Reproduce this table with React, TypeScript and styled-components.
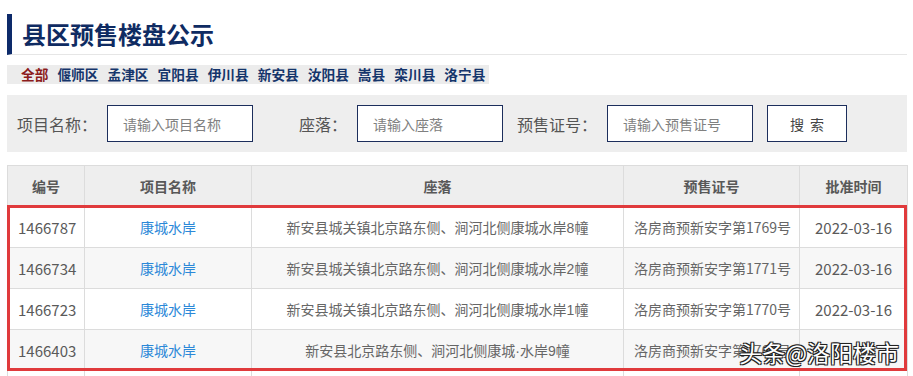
import React from "react";
import styled, { createGlobalStyle } from "styled-components";

const GlobalStyle = createGlobalStyle`
  html, body { margin: 0; padding: 0; background: #fff; }
  body { font-family: "Noto Sans CJK SC", sans-serif; }
  * { box-sizing: border-box; }
`;

const Page = styled.div`
  width: 900px;
  margin-left: 7px;
  padding-top: 14px;
`;

const TitleBar = styled.div`
  height: 41px;
  border-left: 5px solid #0d2a6a;
  border-bottom: 1px solid #e6e6e6;
  display: flex;
  align-items: center;
  padding-left: 10px;
`;

const Title = styled.h2`
  margin: 0;
  font-size: 24px;
  font-weight: 700;
  color: #0f2b62;
  font-family: "Noto Sans CJK SC", sans-serif;
  line-height: 1;
`;

const Areas = styled.div`
  margin-top: 10px;
  height: 19px;
  display: inline-flex;
  align-items: center;
  gap: 9px;
  padding: 0 4px 0 14px;
  background: #ececec;
`;

const Area = styled.a<{ $active?: boolean }>`
  font-size: 13.7px;
  font-weight: 700;
  line-height: 19px;
  font-family: "Noto Sans CJK SC", sans-serif;
  color: ${(p) => (p.$active ? "#8c1c1c" : "#15356b")};
  text-decoration: none;
  cursor: pointer;
`;

const SearchPanel = styled.div`
  margin-top: 10px;
  height: 57px;
  background: #eeeeee;
  display: flex;
  align-items: center;
  gap: 14px;
  padding-left: 10px;
`;

const Field = styled.div`
  display: flex;
  align-items: center;
`;

const Label = styled.label`
  width: 80px;
  margin-right: 10px;
  text-align: right;
  font-size: 16px;
  color: #555;
  font-family: "Noto Sans CJK SC", sans-serif;
  white-space: nowrap;
`;

const Input = styled.input`
  width: 146px;
  height: 37px;
  border: 1px solid #1c2e5c;
  background: #fff;
  padding: 0 0 0 15px;
  font-size: 14px;
  font-family: "Noto Sans CJK SC", sans-serif;
  color: #333;
  outline: none;
  &::placeholder { color: #808080; }
`;

const SearchButton = styled.button`
  width: 80px;
  height: 37px;
  border: 1px solid #1c2e5c;
  background: #fff;
  font-size: 14px;
  color: #444;
  font-family: "Noto Sans CJK SC", sans-serif;
  word-spacing: 3px;
  cursor: pointer;
`;

const TableWrap = styled.div`
  position: relative;
  margin-top: 13px;
`;

const Table = styled.table`
  width: 900px;
  table-layout: fixed;
  border-collapse: collapse;
`;

const HeadCell = styled.th`
  height: 41px;
  background: #eeeeee;
  border: 1px solid #dcdcdc;
  font-size: 14px;
  font-weight: 700;
  color: #585858;
  font-family: "Noto Sans CJK SC", sans-serif;
  text-align: center;
`;

const Row = styled.tr<{ $alt: boolean }>`
  height: 41px;
  background: ${(p) => (p.$alt ? "#f7f7f7" : "#ffffff")};
`;

const Cell = styled.td<{ $align?: string }>`
  border: 1px solid #dcdcdc;
  padding: 0 10px;
  font-size: 14px;
  font-family: "Noto Sans CJK SC", sans-serif;
  color: #666;
  text-align: ${(p) => p.$align || "center"};
  white-space: nowrap;
  overflow: hidden;
`;

const LocCell = styled(Cell)`
  font-family: "Liberation Sans", "Noto Sans CJK SC", sans-serif;
`;

const NumCell = styled(Cell)`
  font-size: 15px;
  color: #5a5a5a;
`;

const Link = styled.a`
  color: #2b88d8;
  text-decoration: none;
  cursor: pointer;
`;

const Highlight = styled.div`
  position: absolute;
  left: 0;
  top: 40px;
  width: 900px;
  height: 166px;
  border: 3px solid #e03a3c;
  pointer-events: none;
`;

const Watermark = styled.div`
  position: absolute;
  right: 8px;
  top: 176px;
  font-size: 23px;
  line-height: 1;
  color: #fff;
  font-family: "Noto Sans CJK SC", sans-serif;
  text-shadow: -1px -1px 0 #222, 1px -1px 0 #222, -1px 1px 0 #222, 1px 1px 0 #222,
    0 0 2px #000;
  white-space: nowrap;
`;

const areas = ["全部", "偃师区", "孟津区", "宜阳县", "伊川县", "新安县", "汝阳县", "嵩县", "栾川县", "洛宁县"];

const cols = [
  { label: "编号", width: 77 },
  { label: "项目名称", width: 167 },
  { label: "座落", width: 372 },
  { label: "预售证号", width: 176 },
  { label: "批准时间", width: 108 },
];

const CE = "\u4fa7";

const rows = [
  { id: "1466787", name: "康城水岸", loc: `新安县城关镇北京路东${CE}、涧河北${CE}康城水岸8幢`, cert: "洛房商预新安字第1769号", date: "2022-03-16" },
  { id: "1466734", name: "康城水岸", loc: `新安县城关镇北京路东${CE}、涧河北${CE}康城水岸2幢`, cert: "洛房商预新安字第1771号", date: "2022-03-16" },
  { id: "1466723", name: "康城水岸", loc: `新安县城关镇北京路东${CE}、涧河北${CE}康城水岸1幢`, cert: "洛房商预新安字第1770号", date: "2022-03-16" },
  { id: "1466403", name: "康城水岸", loc: `新安县北京路东${CE}、涧河北${CE}康城\u00b7水岸9幢`, cert: "洛房商预新安字第1768号", date: "" },
];

export default function App() {
  return (
    <>
      <GlobalStyle />
      <Page>
        <TitleBar>
          <Title>县区预售楼盘公示</Title>
        </TitleBar>
        <Areas>
          {areas.map((a, i) => (
            <Area key={a} $active={i === 0}>{a}</Area>
          ))}
        </Areas>
        <SearchPanel>
          <Field>
            <Label>项目名称：</Label>
            <Input placeholder="请输入项目名称" />
          </Field>
          <Field>
            <Label>座落：</Label>
            <Input placeholder="请输入座落" />
          </Field>
          <Field>
            <Label>预售证号：</Label>
            <Input placeholder="请输入预售证号" />
          </Field>
          <SearchButton>搜 索</SearchButton>
        </SearchPanel>
        <TableWrap>
          <Table>
            <colgroup>
              {cols.map((c) => (
                <col key={c.label} style={{ width: c.width }} />
              ))}
            </colgroup>
            <thead>
              <tr>
                {cols.map((c) => (
                  <HeadCell key={c.label}>{c.label}</HeadCell>
                ))}
              </tr>
            </thead>
            <tbody>
              {rows.map((r, i) => (
                <Row key={r.id} $alt={i % 2 === 1}>
                  <NumCell $align="left">{r.id}</NumCell>
                  <Cell><Link>{r.name}</Link></Cell>
                  <LocCell>{r.loc}</LocCell>
                  <Cell>{r.cert}</Cell>
                  <NumCell>{r.date}</NumCell>
                </Row>
              ))}
              <Row $alt={false}>
                <Cell $align="left" />
                <Cell />
                <Cell />
                <Cell />
                <Cell />
              </Row>
            </tbody>
          </Table>
          <Highlight />
          <Watermark>头条@洛阳楼市</Watermark>
        </TableWrap>
      </Page>
    </>
  );
}
